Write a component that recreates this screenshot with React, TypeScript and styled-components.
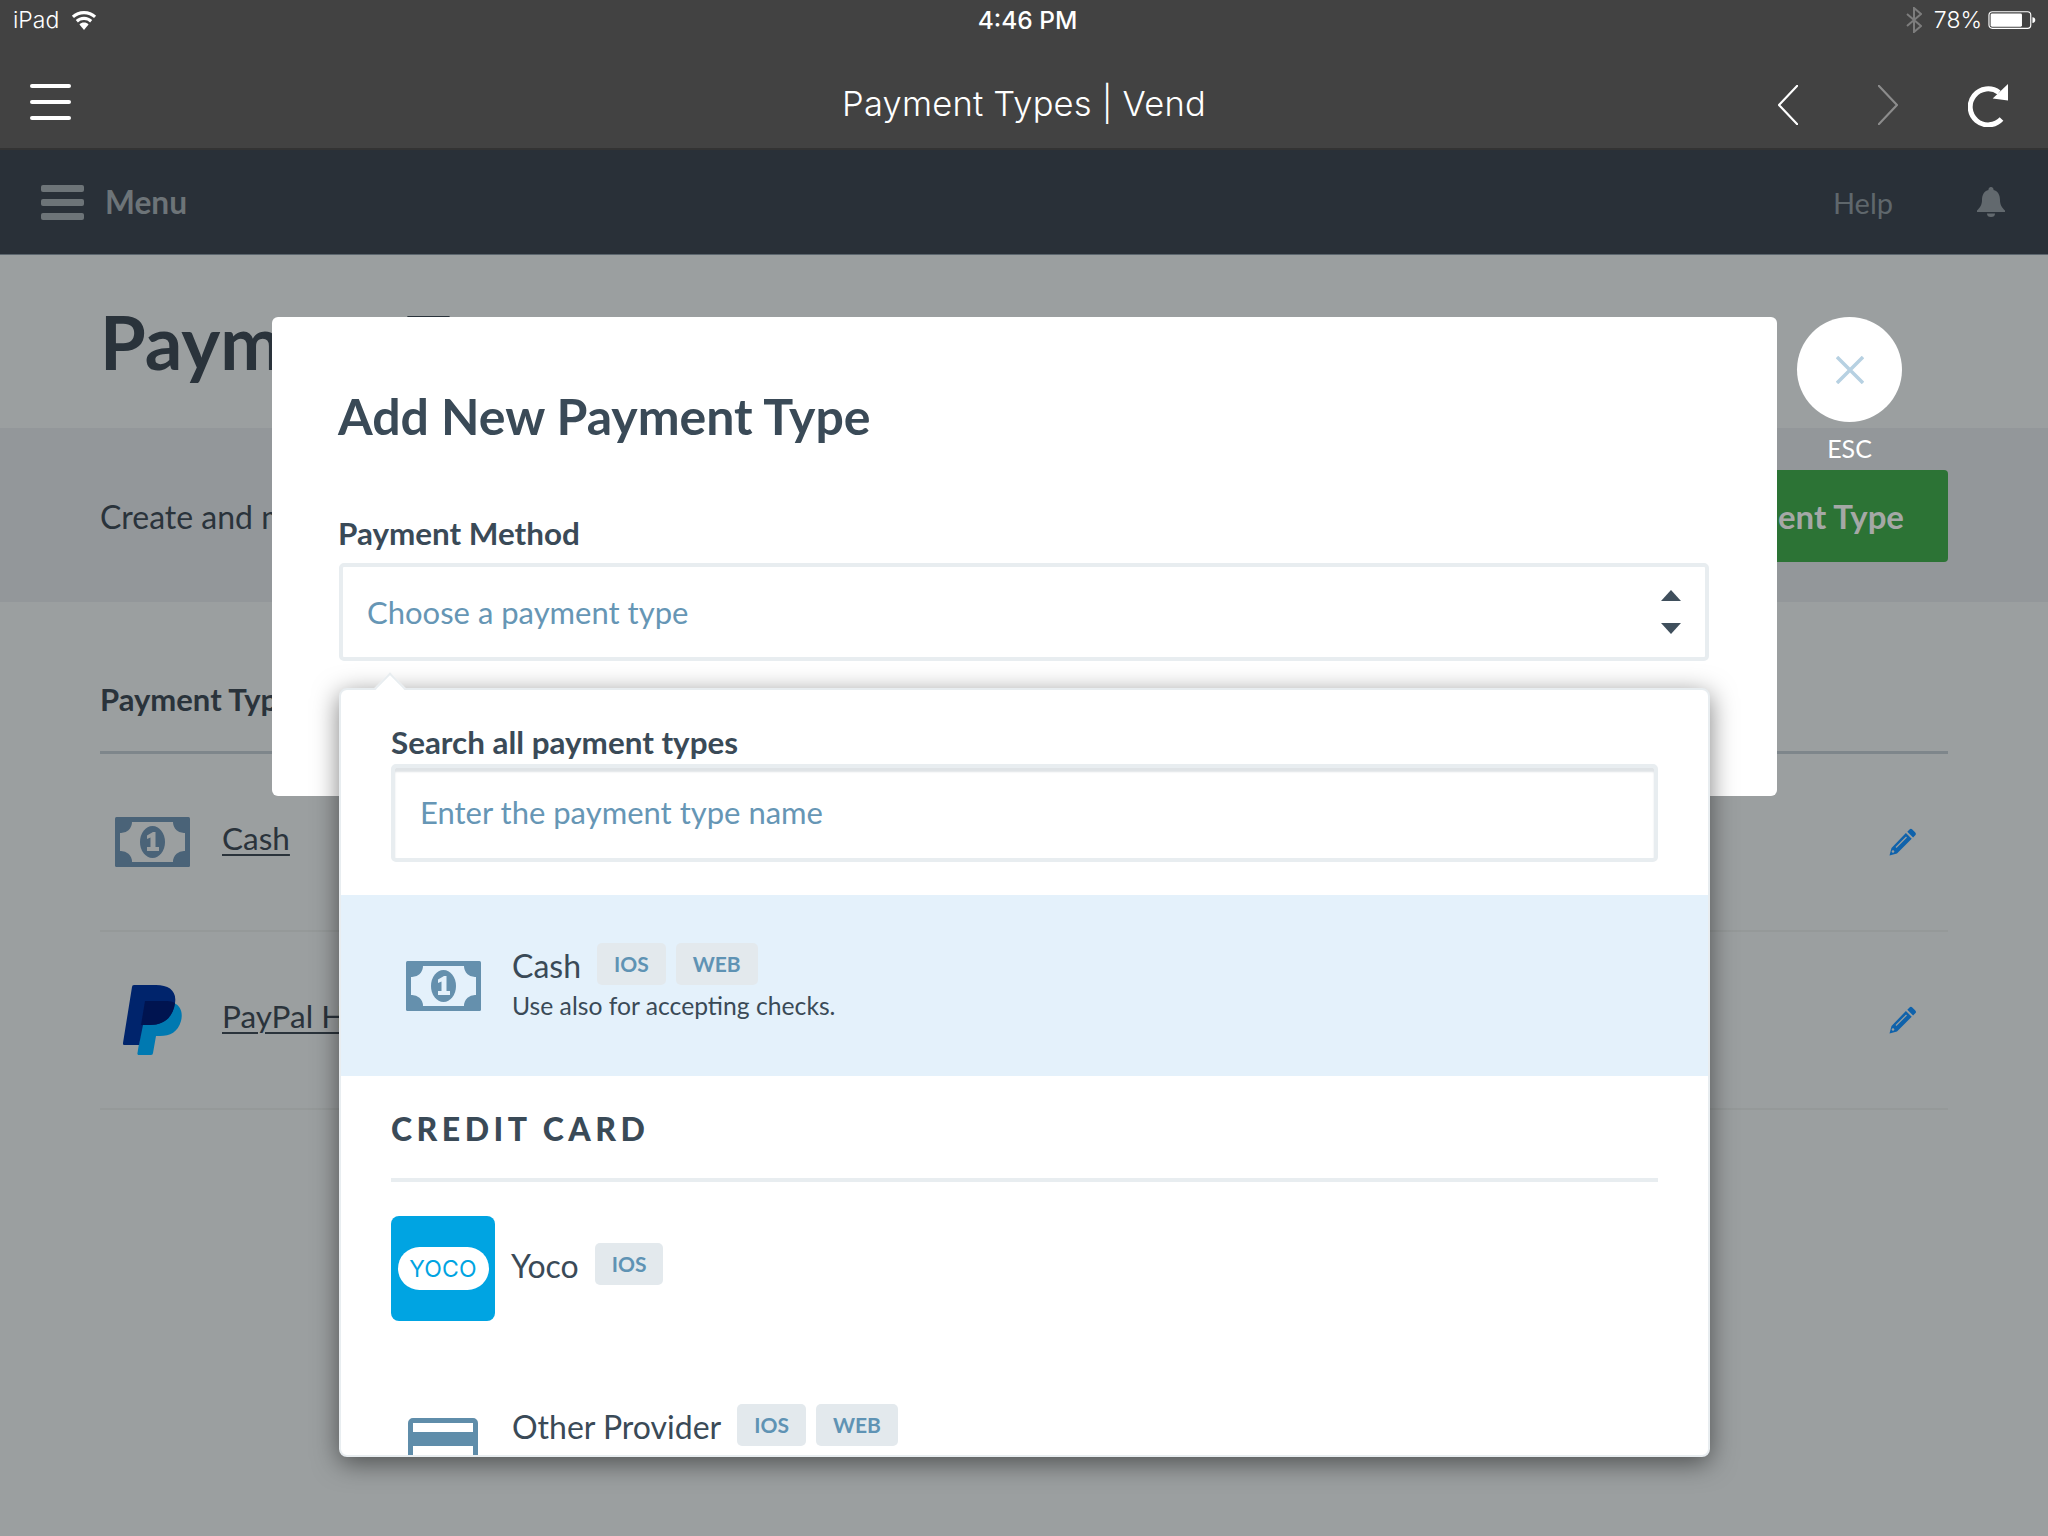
import React from 'react';
import styled, { createGlobalStyle } from 'styled-components';

const Global = createGlobalStyle`
  html, body { margin: 0; padding: 0; background: #9b9fa0; }
  * { box-sizing: border-box; }
  body { font-family: "Lato", "Liberation Sans", sans-serif; }
`;

const Page = styled.div`
  position: relative;
  width: 2048px;
  height: 1536px;
  overflow: hidden;
  background: #9b9fa0;
`;

const Chrome = styled.header`
  height: 150px;
  background: #424242;
  border-bottom: 2px solid #333;
  color: #fff;
`;
const StatusBar = styled.div`
  display: grid;
  grid-template-columns: 1fr auto 1fr;
  align-items: center;
  height: 40px;
  padding: 0 12px 0 13px;
  font-family: "Inter", sans-serif;
  font-size: 23px;
`;
const StatusLeft = styled.div`
  display: flex;
  align-items: center;
  gap: 12px;
  font-weight: 300;
`;
const Clock = styled.div`
  padding-left: 6px;
  font-size: 24.5px;
  font-weight: 500;
`;
const StatusRight = styled.div`
  display: flex;
  align-items: center;
  justify-content: flex-end;
  gap: 6px;
  font-weight: 300;
  > :first-child { margin-right: 6px; }
`;
const BrowserBar = styled.div`
  display: grid;
  grid-template-columns: 1fr auto 1fr;
  align-items: center;
  height: 108px;
  padding: 16px 40px 0;
`;
const BrowserTitle = styled.div`
  padding-top: 2px;
  font-family: "Inter", sans-serif;
  font-weight: 300;
  font-size: 34.5px;
  letter-spacing: 0.2px;
`;
const BrowserActions = styled.div`
  display: flex;
  align-items: center;
  justify-content: flex-end;
  gap: 70px;
  padding-top: 6px;
  > :first-child { margin-right: 10px; }
`;
const Burger = styled.div`
  display: flex;
  flex-direction: column;
  gap: 12px;
  width: 41px;
  margin-left: -10px;
  span { display: block; height: 4px; background: #fff; border-radius: 2px; }
`;

const NavBar = styled.nav`
  display: flex;
  align-items: center;
  justify-content: space-between;
  height: 105px;
  padding: 0 43px 0 41px;
  background: #293038;
  border-bottom: 1px solid #5c666e;
`;
const MenuToggle = styled.div`
  display: flex;
  align-items: center;
  gap: 21px;
  color: #6d7478;
  font-size: 31.7px;
  font-weight: 700;
`;
const MenuBars = styled.div`
  display: flex;
  flex-direction: column;
  gap: 7px;
  width: 43px;
  span { display: block; height: 7px; background: #6d7478; border-radius: 2px; }
`;
const NavRight = styled.div`
  display: flex;
  align-items: center;
  gap: 84px;
  color: #5f676c;
  font-size: 29px;
`;

const PageHead = styled.div`
  height: 173px;
  padding: 44px 100px 0;
`;
const PageTitle = styled.h1`
  margin: 0;
  font-size: 74px;
  line-height: 86px;
  font-weight: 700;
  color: #2a333b;
`;
const Band = styled.div`
  display: flex;
  align-items: center;
  justify-content: space-between;
  height: 174px;
  padding: 2px 100px 0;
  background: #93979a;
  font-size: 32px;
  color: #2a333b;
`;
const GreenButton = styled.div`
  display: flex;
  align-items: center;
  height: 92px;
  padding: 0 44px;
  background: #2c7335;
  border-radius: 4px;
  color: #a5a8a6;
  font-size: 33px;
  font-weight: 700;
`;
const TableWrap = styled.section`
  margin: 0 100px;
`;
const TableHead = styled.div`
  display: flex;
  align-items: center;
  height: 152px;
  padding-top: 44px;
  border-bottom: 3px solid #7e868b;
  font-size: 31px;
  font-weight: 700;
  color: #2a333b;
`;
const Row = styled.div`
  display: flex;
  align-items: center;
  height: 178px;
  padding: 0 31px 0 15px;
  border-bottom: 2px solid #959999;
`;
const RowIcon = styled.div`
  display: flex;
  justify-content: center;
  width: 75px;
  margin-right: 32px;
`;
const RowLink = styled.a`
  flex: 1;
  margin-bottom: 8px;
  color: #2a333b;
  font-size: 31.5px;
  text-decoration: underline;
  text-underline-offset: 4px;
  text-decoration-thickness: 2px;
`;

const Modal = styled.div`
  position: absolute;
  left: 272px;
  top: 317px;
  width: 1505px;
  height: 479px;
  padding: 68px 66px 0;
  background: #fff;
  border-radius: 6px;
`;
const ModalTitle = styled.h2`
  margin: 0 0 67px;
  font-size: 50px;
  line-height: 62px;
  font-weight: 700;
  color: #3a4a57;
`;
const FieldLabel = styled.label`
  display: block;
  font-size: 31.4px;
  line-height: 38px;
  font-weight: 700;
  color: #3a4a57;
`;
const Select = styled.div`
  display: flex;
  align-items: center;
  justify-content: space-between;
  height: 98px;
  margin: 11px 2px 0 1px;
  padding: 0 24px 0 24px;
  border: 4px solid #e8edf0;
  border-radius: 5px;
  font-size: 31px;
  color: #6696b5;
`;
const Stepper = styled.div`
  display: flex;
  flex-direction: column;
  gap: 22px;
`;
const Caret = styled.div<{ $down?: boolean }>`
  width: 0;
  height: 0;
  border-left: 10px solid transparent;
  border-right: 10px solid transparent;
  ${(p) => (p.$down ? 'border-top: 11px solid #3f4f5c;' : 'border-bottom: 11px solid #3f4f5c;')}
`;

const CloseColumn = styled.div`
  position: absolute;
  left: 1797px;
  top: 317px;
  width: 105px;
  display: flex;
  flex-direction: column;
  align-items: center;
  color: #fff;
  font-size: 25px;
`;
const CloseCircle = styled.div`
  display: flex;
  align-items: center;
  justify-content: center;
  width: 105px;
  height: 105px;
  margin-bottom: 11px;
  background: #fff;
  border-radius: 50%;
`;

const Dropdown = styled.div`
  position: absolute;
  left: 339px;
  top: 688px;
  width: 1371px;
  height: 769px;
  background: #fff;
  border: 2px solid #e8edf0;
  border-radius: 8px;
  box-shadow: 0 6px 26px rgba(0, 0, 0, 0.5);
`;
const Notch = styled.div`
  position: absolute;
  left: 38px;
  top: -13px;
  width: 22px;
  height: 22px;
  background: #fff;
  border-left: 2px solid #e8edf0;
  border-top: 2px solid #e8edf0;
  transform: rotate(45deg);
`;
const DropdownBody = styled.div`
  position: relative;
  height: 100%;
  overflow: hidden;
  border-radius: 6px;
`;
const SearchArea = styled.div`
  height: 205px;
  padding: 32px 50px 0;
`;
const SearchLabel = styled.div`
  font-size: 31.4px;
  line-height: 40px;
  font-weight: 700;
  color: #3a4a57;
`;
const SearchInput = styled.div`
  display: flex;
  align-items: center;
  height: 98px;
  margin-top: 2px;
  padding: 0 25px 3px;
  border: 4px solid #e8edf0;
  border-radius: 5px;
  box-shadow: inset 0 4px 2px #dfe3e6;
  font-size: 31px;
  color: #6696b5;
`;
const Highlight = styled.div`
  display: flex;
  align-items: center;
  height: 181px;
  padding: 0 64px;
  background: #e4f1fb;
`;
const OptionIcon = styled.div`
  width: 76px;
  margin-right: 31px;
  display: flex;
  justify-content: center;
`;
const OptionText = styled.div`
  margin-bottom: 7px;
`;
const OptionTitle = styled.div`
  display: flex;
  align-items: center;
  gap: 10px;
  font-size: 32px;
  line-height: 42px;
  color: #3a4a57;
`;
const OptionName = styled.span`
  margin-right: 6px;
  padding-top: 4px;
`;
const OptionNote = styled.div`
  margin-top: 2px;
  font-size: 24.7px;
  line-height: 34px;
  color: #3a4a57;
`;
const Tag = styled.span`
  display: inline-flex;
  align-items: center;
  justify-content: center;
  height: 42px;
  padding: 0 17px;
  background: #e3e9ed;
  border-radius: 5px;
  font-size: 21px;
  font-weight: 700;
  color: #5f93b4;
`;
const GroupHead = styled.div`
  height: 106px;
  margin: 0 50px;
  padding-top: 34px;
  border-bottom: 4px solid #e8edf0;
  font-size: 32px;
  line-height: 38px;
  font-weight: 900;
  letter-spacing: 4.5px;
  color: #3a4a57;
`;
const YocoRow = styled.div`
  display: flex;
  align-items: flex-start;
  padding: 34px 50px 0;
  height: 220px;
`;
const YocoBadge = styled.div`
  display: flex;
  align-items: center;
  justify-content: center;
  width: 104px;
  height: 105px;
  margin-right: 16px;
  background: #00a4e2;
  border-radius: 8px;
`;
const YocoPill = styled.div`
  display: flex;
  align-items: center;
  justify-content: center;
  width: 91px;
  height: 43px;
  background: #fff;
  border-radius: 22px;
  color: #00a4e2;
  font-family: "Inter", sans-serif;
  font-size: 23px;
  font-weight: 400;
  letter-spacing: 0.2px;
`;
const YocoTitle = styled(OptionTitle)`
  padding-top: 25px;
`;
const OtherRow = styled.div`
  display: flex;
  align-items: flex-start;
  padding: 0 64px;
`;
const CardWrap = styled.div`
  width: 76px;
  margin-right: 31px;
  padding-top: 16px;
  display: flex;
  justify-content: center;
`;

const BillWrap = styled.div`
  line-height: 0;
`;

const Bill = ({ ink, paper }: { ink: string; paper: string }) => (
  <BillWrap>
    <svg width="75" height="50" viewBox="0 0 75 50">
      <rect width="75" height="50" rx="1.5" fill={ink} />
      <path
        fill={paper}
        d="M17 5h41a11 11 0 0 0 12 11v18a11 11 0 0 0-12 11H17A11 11 0 0 0 5 34V16A11 11 0 0 0 17 5Z"
      />
      <ellipse cx="37.5" cy="25" rx="12.5" ry="16" fill={ink} />
      <path fill={paper} d="M32 34v-4h3.5v-9.5L32 22v-3.6l6-3.4h2.5v15H44v4Z" />
    </svg>
  </BillWrap>
);

const Pencil = () => (
  <svg width="28" height="28" viewBox="0 0 28 28">
    <path fill="#0f62ab" d="M20.5 1.5a2 2 0 0 1 2.8 0l3 3a2 2 0 0 1 0 2.8l-2.2 2.2-5.8-5.8ZM16.9 5 22.700 10.800 8 25.500 0.500 27.500 2.500 20Z" />
    <path stroke="#9b9fa0" strokeWidth="1.2" d="M7 19.500 17.500 9" />
    <circle cx="4" cy="23.500" r="1.300" fill="#9b9fa0" />
  </svg>
);

const PayPal = () => (
  <svg width="60" height="70" viewBox="0 0 60 70">
    <path fill="#0079b1" d="M51 18c7 3 9 10 7 18-3 11-11 15-21 15h-4l-3 17a2 2 0 0 1-2 2H16a1.500 1.500 0 0 1-1.500-2l8-50Z" />
    <path fill="#00246c" d="M11 0h22c13 0 21 6 19 18-2 15-12 22-25 22h-7l-4 20H1.500A1.500 1.500 0 0 1 0 58L9 2a2 2 0 0 1 2-2Z" />
    <path fill="#001450" d="M22 16h22c3 0 6 .7 8 2-2 15-12 22-25 22h-9Z" />
  </svg>
);

const Wifi = () => (
  <svg width="26" height="19" viewBox="0 0 24 18" fill="#fff">
    <path d="M12 0C7.500 0 3.500 1.700.5 4.500l2 2.200C5 4.300 8.300 3 12 3s7 1.300 9.500 3.700l2-2.200C20.500 1.700 16.500 0 12 0Z" />
    <path d="M12 5.500c-3 0-5.800 1.200-7.800 3.100l2 2.200C7.700 9.300 9.700 8.500 12 8.500s4.300.8 5.800 2.300l2-2.200C17.800 6.700 15 5.500 12 5.500Z" />
    <path d="M12 11c-1.700 0-3.200.6-4.300 1.700L12 18l4.300-5.300C15.200 11.600 13.700 11 12 11Z" />
  </svg>
);

const Bluetooth = () => (
  <svg width="16" height="26" viewBox="0 0 16 26" fill="none" stroke="#7d7d7d" strokeWidth="2">
    <path d="M1 7l14 12-7 6V1l7 6L1 19" />
  </svg>
);

const Battery = () => (
  <svg width="48" height="19" viewBox="0 0 50 20">
    <rect x="0.750" y="0.750" width="44" height="17.500" rx="3.500" fill="none" stroke="#fff" strokeWidth="1.200" />
    <rect x="2.500" y="2.500" width="33" height="14" rx="1.500" fill="#fff" />
    <path fill="#fff" d="M46.500 6.500c2 0 3 1.200 3 3s-1 3-3 3Z" />
  </svg>
);

const Chevron = ({ d, stroke }: { d: string; stroke: string }) => (
  <svg width="20" height="40" viewBox="0 0 20 40" fill="none" stroke={stroke} strokeWidth="2.200">
    <path d={d} />
  </svg>
);

const Reload = () => (
  <svg width="40" height="43" viewBox="0 0 40 43">
    <path fill="none" stroke="#fff" strokeWidth="5" d="M33.500 35A18 18 0 1 1 31 8.500" />
    <path fill="#fff" d="M40 0v16.500L24.700 14.600Z" />
  </svg>
);

const Bell = () => (
  <svg width="28" height="30" viewBox="0 0 28 30" fill="#62696e">
    <path d="M14 0a2.500 2.500 0 0 1 2.500 3C21 4 23 8 23 13c0 5 2 7.500 5 10.500V25H0v-1.500C3 20.500 5 18 5 13c0-5 2-9 6.500-10A2.500 2.500 0 0 1 14 0Z" />
    <path d="M10 26.500h8a4 3.500 0 0 1-8 0Z" />
  </svg>
);

const Cross = () => (
  <svg width="28" height="28" viewBox="0 0 28 28" stroke="#b7d1e2" strokeWidth="3.500">
    <path d="M1 1l26 26M27 1 1 27" />
  </svg>
);

const CardIcon = () => (
  <svg width="70" height="44" viewBox="0 0 70 44">
    <path fill="#5f8daa" fillRule="evenodd" d="M5 0h60a5 5 0 0 1 5 5v39h-5V28H5v16H0V5a5 5 0 0 1 5-5Zm0 5v9h60V5Z" />
  </svg>
);

export default function App() {
  return (
    <Page>
      <Global />
      <Chrome>
        <StatusBar>
          <StatusLeft>iPad <Wifi /></StatusLeft>
          <Clock>4:46 PM</Clock>
          <StatusRight><Bluetooth /><span>78%</span><Battery /></StatusRight>
        </StatusBar>
        <BrowserBar>
          <Burger><span /><span /><span /></Burger>
          <BrowserTitle>Payment Types | Vend</BrowserTitle>
          <BrowserActions>
            <Chevron stroke="#fff" d="M20 0 1 20l19 20" />
            <Chevron stroke="#8c8c8c" d="M0 0l19 20L0 40" />
            <Reload />
          </BrowserActions>
        </BrowserBar>
      </Chrome>
      <NavBar>
        <MenuToggle>
          <MenuBars><span /><span /><span /></MenuBars>
          Menu
        </MenuToggle>
        <NavRight><span>Help</span><Bell /></NavRight>
      </NavBar>
      <main>
        <PageHead><PageTitle>Payment Types</PageTitle></PageHead>
        <Band>
          <span>Create and manage payment types</span>
          <GreenButton>Add Payment Type</GreenButton>
        </Band>
        <TableWrap>
          <TableHead>Payment Types</TableHead>
          <Row>
            <RowIcon><Bill ink="#4a6378" paper="#9b9fa0" /></RowIcon>
            <RowLink>Cash</RowLink>
            <Pencil />
          </Row>
          <Row>
            <RowIcon><PayPal /></RowIcon>
            <RowLink>PayPal Here</RowLink>
            <Pencil />
          </Row>
        </TableWrap>
      </main>

      <Modal>
        <ModalTitle>Add New Payment Type</ModalTitle>
        <FieldLabel>Payment Method</FieldLabel>
        <Select>
          Choose a payment type
          <Stepper><Caret /><Caret $down /></Stepper>
        </Select>
      </Modal>

      <CloseColumn>
        <CloseCircle><Cross /></CloseCircle>
        ESC
      </CloseColumn>

      <Dropdown>
        <Notch />
        <DropdownBody>
          <SearchArea>
            <SearchLabel>Search all payment types</SearchLabel>
            <SearchInput>Enter the payment type name</SearchInput>
          </SearchArea>
          <Highlight>
            <OptionIcon><Bill ink="#6590ad" paper="#e4f1fb" /></OptionIcon>
            <OptionText>
              <OptionTitle>
                <OptionName>Cash</OptionName>
                <Tag>IOS</Tag>
                <Tag>WEB</Tag>
              </OptionTitle>
              <OptionNote>Use also for accepting checks.</OptionNote>
            </OptionText>
          </Highlight>
          <GroupHead>CREDIT CARD</GroupHead>
          <YocoRow>
            <YocoBadge><YocoPill>YOCO</YocoPill></YocoBadge>
            <YocoTitle>
              <OptionName>Yoco</OptionName>
              <Tag>IOS</Tag>
            </YocoTitle>
          </YocoRow>
          <OtherRow>
            <CardWrap><CardIcon /></CardWrap>
            <OptionTitle>
              <OptionName>Other Provider</OptionName>
              <Tag>IOS</Tag>
              <Tag>WEB</Tag>
            </OptionTitle>
          </OtherRow>
        </DropdownBody>
      </Dropdown>
    </Page>
  );
}
